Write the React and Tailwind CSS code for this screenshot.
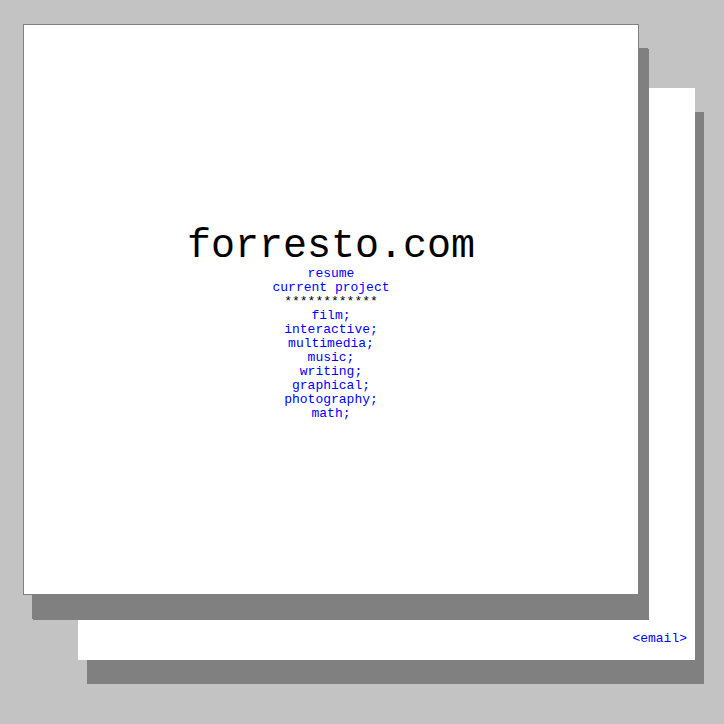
import React from 'react';

const sections = ['film;', 'interactive;', 'multimedia;', 'music;', 'writing;', 'graphical;', 'photography;', 'math;'];

function App() {
  return (
    <div className="relative w-[724px] h-[724px] bg-[#c3c3c3] overflow-hidden font-['Liberation_Mono','Courier_New',monospace]">
      {/* back card */}
      <div className="absolute left-[78px] top-[88px] w-[617px] h-[572px] bg-white shadow-[9px_24px_0_0_#808080] flex items-end justify-end pr-[8px] pb-[14px]">
        <a href="#" className="text-[13px] leading-[14px] text-[#0000ff]">&lt;email&gt;</a>
      </div>

      {/* front card */}
      <div className="absolute left-[23px] top-[24px] w-[616px] h-[571px] bg-white border border-[#808080] shadow-[9px_24px_0_0_#808080,10px_25px_0_0_#808080] flex flex-col items-center pt-[202px]">
        <h1 className="text-[40px] leading-[40px] text-black">forresto.com</h1>
        <div className="flex flex-col items-center text-[13px] leading-[14px]">
          <a href="#" className="text-[#0000ff]">resume</a>
          <a href="#" className="text-[#0000ff]">current project</a>
          <span className="text-black">************</span>
          {sections.map(s => (
            <a key={s} href="#" className="text-[#0000ff]">{s}</a>
          ))}
        </div>
      </div>
    </div>
  );
}

export default App;
